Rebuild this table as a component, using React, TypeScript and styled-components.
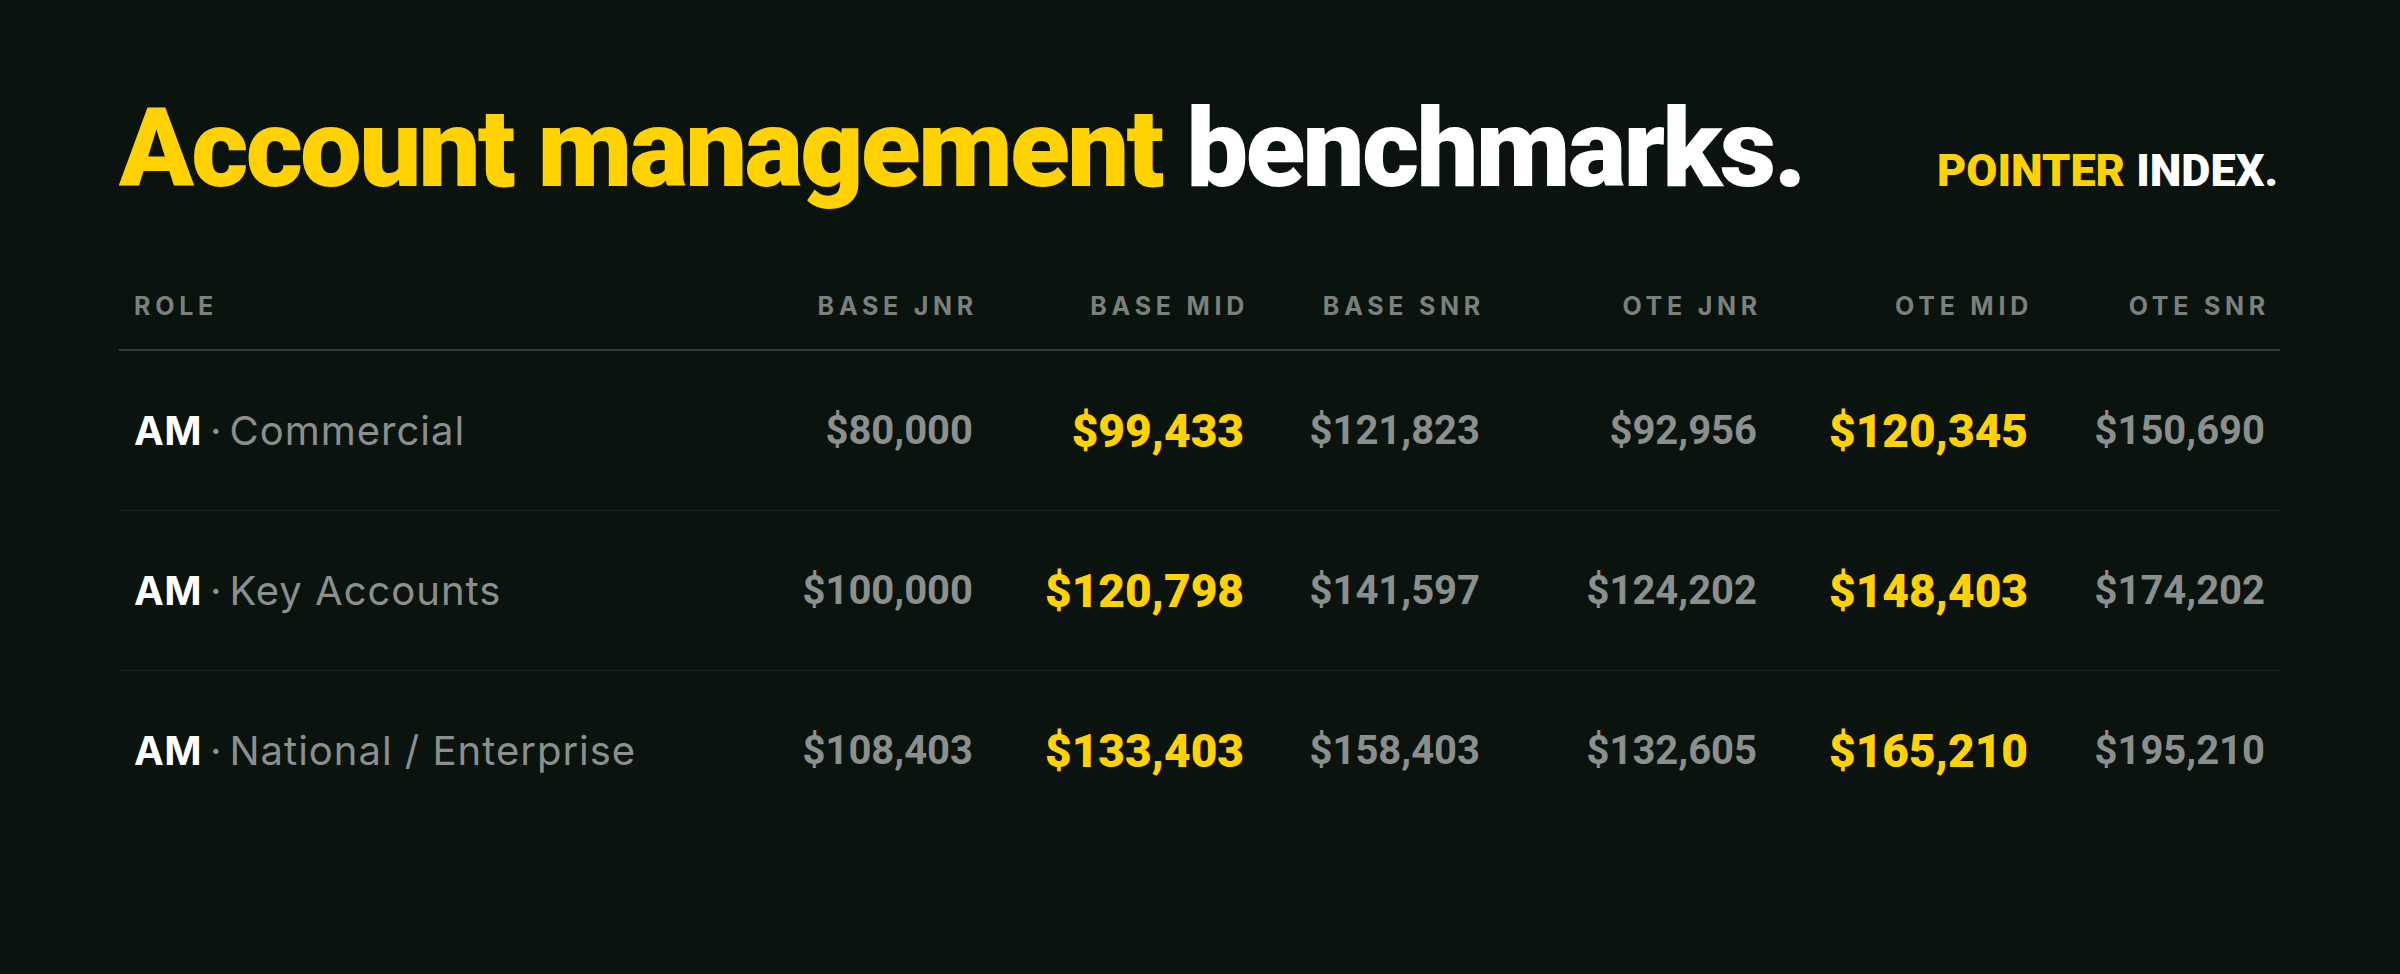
import React from "react";
import styled, { createGlobalStyle } from "styled-components";

const Global = createGlobalStyle`
  html, body { margin: 0; padding: 0; background: #0b130f; }
  body { font-family: Roboto, "Liberation Sans", sans-serif; }
  * { box-sizing: border-box; }
`;

const YELLOW = "#ffd200";
const GREY = "#8b8f8d";
const HEAD_GREY = "#7b807d";

const Page = styled.main`
  width: 2400px;
  height: 974px;
  background: #0b130f;
  padding: 94px 120px 0 119px;
`;

const TitleBar = styled.header`
  display: flex;
  justify-content: space-between;
  align-items: baseline;
`;

const Title = styled.h1`
  margin: 0;
  font-family: Roboto, "Liberation Sans", sans-serif;
  font-weight: 900;
  font-size: 110px;
  line-height: 110px;
  letter-spacing: -0.025em;
  color: #ffffff;
`;

const Brand = styled.div`
  font-family: Roboto, "Liberation Sans", sans-serif;
  font-weight: 900;
  font-size: 45px;
  line-height: 45px;
  color: #ffffff;
  padding-right: 2px;
`;

const Accent = styled.span`
  color: ${YELLOW};
`;

const COLS = "629px 240px 271px 236px 277px 271px 237px";

const HeadRow = styled.div`
  display: grid;
  grid-template-columns: ${COLS};
  margin-top: 90px;
  padding-bottom: 30px;
  border-bottom: 2px solid #3a3e3b;
`;

const HeadCell = styled.div<{ $left?: boolean }>`
  font-family: Inter, Roboto, sans-serif;
  font-weight: 700;
  font-size: 25px;
  line-height: 25px;
  letter-spacing: 0.19em;
  color: ${HEAD_GREY};
  text-align: ${(p) => (p.$left ? "left" : "right")};
  padding: ${(p) => (p.$left ? "0 0 0 15px" : "0 10px 0 0")};
`;

const Row = styled.div<{ $last?: boolean }>`
  display: grid;
  grid-template-columns: ${COLS};
  align-items: center;
  height: 160px;
  border-bottom: ${(p) => (p.$last ? "none" : "1px solid #1f2521")};
`;

const RoleCell = styled.div`
  padding-left: 15px;
  font-family: Inter, Roboto, sans-serif;
  font-size: 40px;
  line-height: 40px;
  color: ${GREY};
  white-space: nowrap;
  letter-spacing: 0.025em;
`;

const RoleTag = styled.span`
  color: #ffffff;
  font-weight: 700;
  letter-spacing: 0.01em;
`;

const Sep = styled.span`
  color: ${GREY};
  margin: 0 0.2em;
  letter-spacing: 0;
`;

const Value = styled.div<{ $hi?: boolean }>`
  text-align: right;
  padding-right: 15px;
  font-family: Roboto, "Liberation Sans", sans-serif;
  font-weight: ${(p) => (p.$hi ? 900 : 700)};
  font-size: ${(p) => (p.$hi ? "46px" : "40px")};
  line-height: ${(p) => (p.$hi ? "46px" : "40px")};
  color: ${(p) => (p.$hi ? YELLOW : GREY)};
`;

const headers = ["BASE JNR", "BASE MID", "BASE SNR", "OTE JNR", "OTE MID", "OTE SNR"];

const rows = [
  { name: "Commercial", vals: ["$80,000", "$99,433", "$121,823", "$92,956", "$120,345", "$150,690"] },
  { name: "Key Accounts", vals: ["$100,000", "$120,798", "$141,597", "$124,202", "$148,403", "$174,202"] },
  { name: "National / Enterprise", vals: ["$108,403", "$133,403", "$158,403", "$132,605", "$165,210", "$195,210"] },
];

export default function App() {
  return (
    <>
      <Global />
      <Page>
        <TitleBar>
          <Title>
            <Accent>Account management</Accent> benchmarks.
          </Title>
          <Brand>
            <Accent>POINTER</Accent> INDEX.
          </Brand>
        </TitleBar>
        <HeadRow>
          <HeadCell $left>ROLE</HeadCell>
          {headers.map((h) => (
            <HeadCell key={h}>{h}</HeadCell>
          ))}
        </HeadRow>
        {rows.map((r, i) => (
          <Row key={r.name} $last={i === rows.length - 1}>
            <RoleCell>
              <RoleTag>AM</RoleTag>
              <Sep>·</Sep>
              {r.name}
            </RoleCell>
            {r.vals.map((v, j) => (
              <Value key={j} $hi={j === 1 || j === 4}>
                {v}
              </Value>
            ))}
          </Row>
        ))}
      </Page>
    </>
  );
}
